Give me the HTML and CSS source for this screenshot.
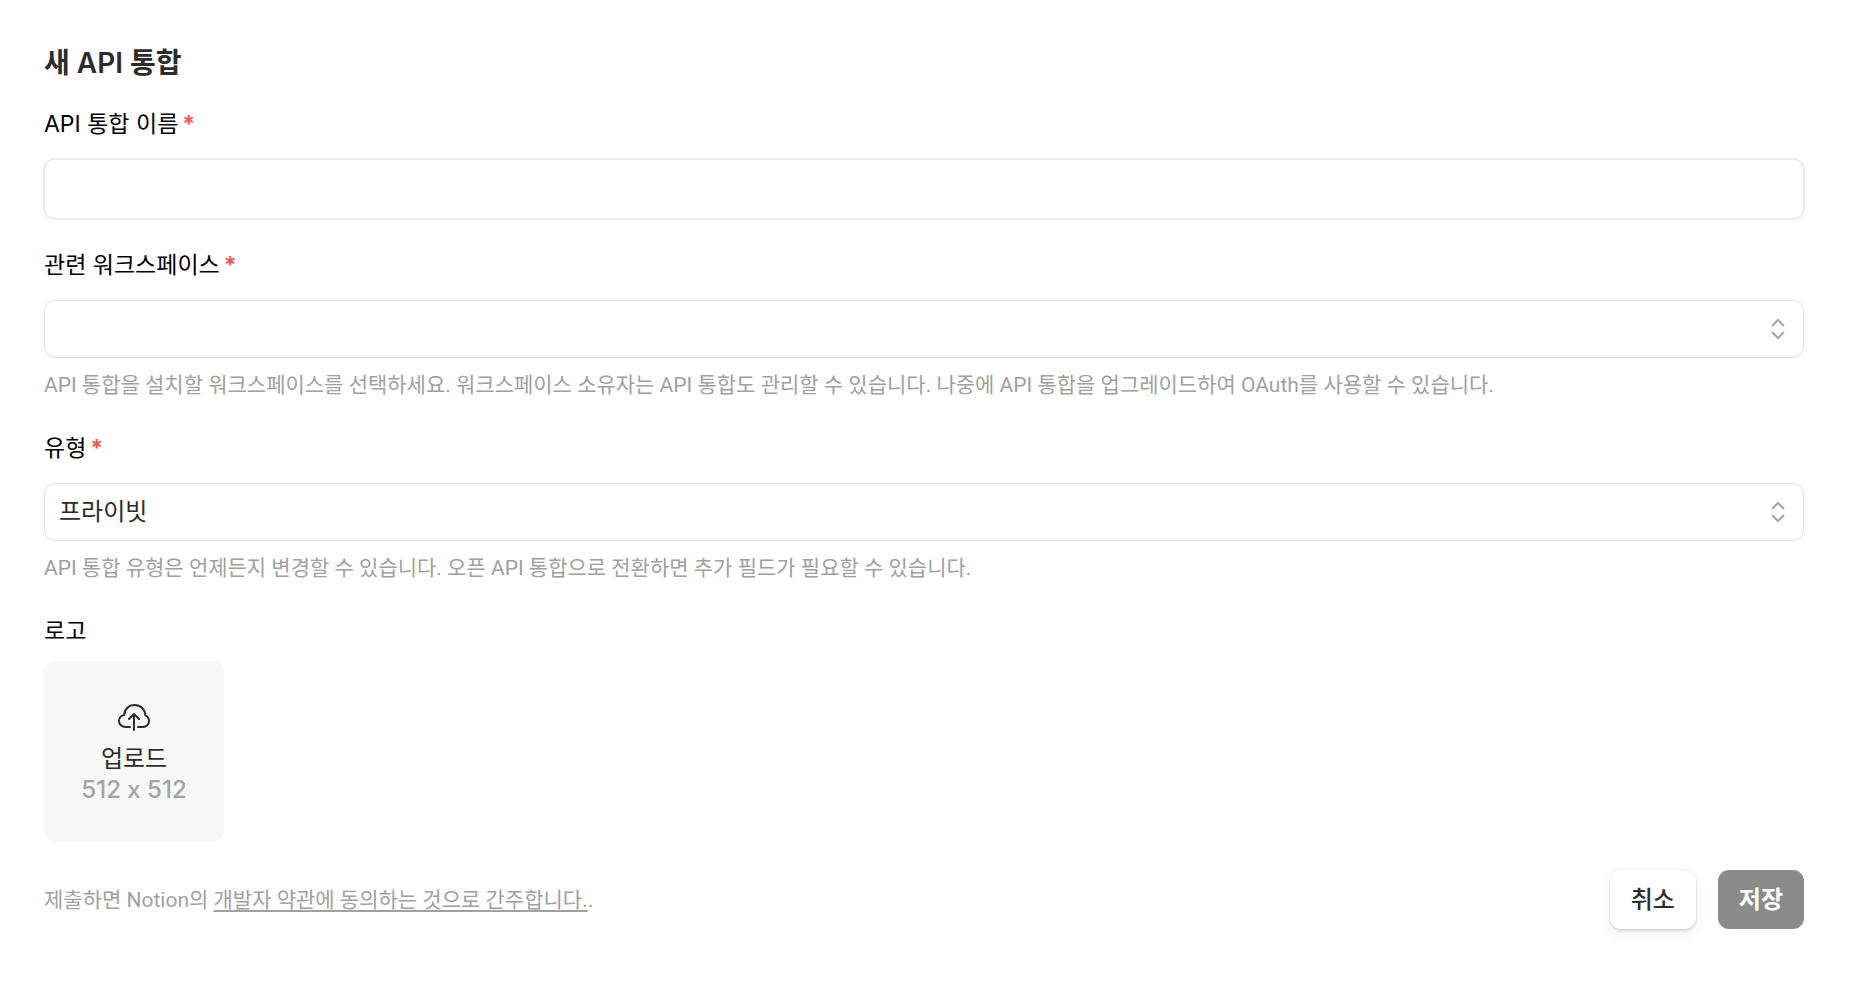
FILE: index.html
```html
<!DOCTYPE html>
<html lang="ko">
<head>
  <meta charset="UTF-8" />
  <meta name="viewport" content="width=device-width, initial-scale=1.0"/>
  <title>새 API 통합</title>
  <link rel="stylesheet" href="styles.css">
</head>
<body>
  <form class="integration-form">
    <h1>새 API 통합</h1>

    <div class="field name-field">
      <label for="name">API 통합 이름<span class="required">*</span></label>
      <input type="text" id="name" class="text-input" required />
    </div>

    <div class="field">
      <label for="workspace">관련 워크스페이스<span class="required">*</span></label>
      <div class="select-box">
        <select id="workspace" required>
          <option value=""></option>
        </select>
        <svg class="chevrons" viewBox="0 0 16 22" aria-hidden="true">
          <path d="M2 8 L8 2 L14 8 M2 14 L8 20 L14 14"/>
        </svg>
      </div>
      <p class="help">API 통합을 설치할 워크스페이스를 선택하세요. 워크스페이스 소유자는 API 통합도 관리할 수 있습니다. 나중에 API 통합을 업그레이드하여 OAuth를 사용할 수 있습니다.</p>
    </div>

    <div class="field">
      <label for="type">유형<span class="required">*</span></label>
      <div class="select-box">
        <select id="type" required>
          <option>프라이빗</option>
        </select>
        <svg class="chevrons" viewBox="0 0 16 22" aria-hidden="true">
          <path d="M2 8 L8 2 L14 8 M2 14 L8 20 L14 14"/>
        </svg>
      </div>
      <p class="help">API 통합 유형은 언제든지 변경할 수 있습니다. 오픈 API 통합으로 전환하면 추가 필드가 필요할 수 있습니다.</p>
    </div>

    <div class="field logo-field">
      <label for="upload">로고</label>
      <button type="button" id="upload" class="upload">
        <svg class="upload-icon" viewBox="0 0 34 28" aria-hidden="true">
          <path d="M13 24 H8.5 C4.8 24 2 21.3 2 18 C2 14.8 4.3 12.4 7.3 12 C7.5 6 11.8 2 17.5 2 C23.5 2 28.3 6.5 28.3 12.3 C30.6 13.3 32 15.5 32 18 C32 21.4 29.4 24 26 24 H21"/>
          <path d="M17 27 V11.5 M12 16 L17 11 L22 16"/>
        </svg>
        <span>업로드</span>
        <span class="size">512 x 512</span>
      </button>
    </div>

    <div class="footer">
      <p class="terms">제출하면 Notion의 <a href="#">개발자 약관에 동의하는 것으로 간주합니다.</a>.</p>
      <div class="actions">
        <button type="button" class="btn btn-cancel">취소</button>
        <button type="submit" class="btn btn-save">저장</button>
      </div>
    </div>
  </form>
</body>
</html>
```
FILE: styles.css
```css
* {
  box-sizing: border-box;
}

body {
  margin: 0;
  padding: 40px 50px 40px 44px;
  font-family: 'Inter', 'Noto Sans CJK KR', sans-serif;
  font-size: 23px;
  line-height: 32px;
  background-color: white;
  color: #2c2c2b;
}

h1 {
  margin: 0 0 21px;
  font-size: 28px;
  font-weight: 600;
  line-height: 47px;
}

p {
  margin: 0;
}

button,
input,
select {
  font-family: inherit;
  font-size: 24px;
  line-height: inherit;
  color: inherit;
}

.field {
  display: flex;
  flex-direction: column;
  margin-bottom: 32px;
}

.name-field {
  margin-bottom: 30px;
}

.field label {
  margin-bottom: 19px;
  color: #000;
}

.required {
  margin-left: 4px;
  font-weight: 700;
  color: #eb5757;
}

.text-input {
  width: 100%;
  height: 60px;
  padding: 0 16px;
  border: 1px solid #ececeb;
  border-radius: 11px;
  box-shadow: 0 0 0 1px #ececeb;
  outline: none;
}

.select-box {
  position: relative;
}

.select-box select {
  display: block;
  width: 100%;
  height: 58px;
  padding: 0 50px 0 14px;
  border: 1px solid #dededd;
  border-radius: 11px;
  background: white;
  appearance: none;
}

.chevrons {
  position: absolute;
  top: 18px;
  right: 18px;
  width: 16px;
  height: 22px;
  fill: none;
  stroke: #a8a59f;
  stroke-width: 2;
  pointer-events: none;
}

.help,
.terms {
  font-family: 'Roboto', 'Noto Sans CJK KR', sans-serif;
  font-size: 21px;
  line-height: 30px;
  color: #a0a0a0;
}

.help {
  margin-top: 12px;
}

.logo-field {
  align-items: flex-start;
  margin-bottom: 29px;
}

.logo-field label {
  margin-bottom: 14px;
}

.upload {
  display: flex;
  flex-direction: column;
  align-items: center;
  justify-content: center;
  width: 180px;
  height: 180px;
  padding: 5px 0 0;
  border: none;
  border-radius: 11px;
  background: #f7f7f7;
  line-height: 31px;
  cursor: pointer;
}

.upload-icon {
  width: 34px;
  height: 28px;
  margin-bottom: 12px;
  fill: none;
  stroke: #2c2c2b;
  stroke-width: 2;
  stroke-linecap: round;
  stroke-linejoin: round;
}

/* keep the plain letter x between the digits */
.size {
  font-weight: 500;
  font-feature-settings: 'calt' 0;
  color: #a5a39e;
}

.footer {
  display: flex;
  align-items: center;
  justify-content: space-between;
}

.terms a {
  color: inherit;
  text-decoration: underline;
  text-decoration-thickness: 2px;
  text-underline-offset: 3px;
}

.actions {
  display: flex;
  gap: 22px;
}

.btn {
  height: 59px;
  padding: 0 21px;
  border: none;
  border-radius: 11px;
  font-weight: 500;
  cursor: pointer;
}

.btn-cancel {
  background: white;
  box-shadow: 0 0 2px rgba(0, 0, 0, 0.12), 0 2px 3px rgba(0, 0, 0, 0.12), 0 6px 16px rgba(0, 0, 0, 0.05);
}

.btn-save {
  background: #8b8b8b;
  color: white;
  font-weight: 600;
}
```
